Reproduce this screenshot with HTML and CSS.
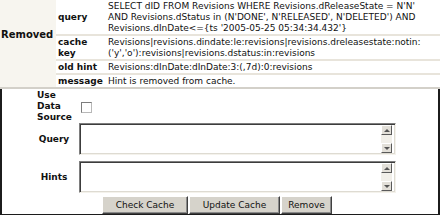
FILE: index.html
```html
<!DOCTYPE html>
<html lang="en">
<head>
    <meta charset="UTF-8">
    <title>Cache Hint</title>
    <link rel="stylesheet" href="styles.css">
</head>
<body>

<table class="result">
    <tr>
        <td class="section" rowspan="4">Removed</td>
        <td class="label">query</td>
        <td class="value">SELECT dID FROM Revisions WHERE Revisions.dReleaseState = N'N'<br>AND Revisions.dStatus in (N'DONE', N'RELEASED', N'DELETED') AND<br>Revisions.dInDate&lt;={ts '2005-05-25 05:34:34.432'}</td>
    </tr>
    <tr>
        <td class="label">cache key</td>
        <td class="value">Revisions|revisions.dindate:le:revisions|revisions.dreleasestate:notin:<br>('y','o'):revisions|revisions.dstatus:in:revisions</td>
    </tr>
    <tr>
        <td class="label">old hint</td>
        <td class="value">Revisions:dInDate:dInDate:3:(,7d):0:revisions</td>
    </tr>
    <tr>
        <td class="label">message</td>
        <td class="value">Hint is removed from cache.</td>
    </tr>
</table>

<div class="form-box">
    <form class="cache-form">
        <label class="field-label left" for="useDataSource">Use Data Source</label>
        <div class="check-cell"><input type="checkbox" id="useDataSource"></div>

        <label class="field-label" for="query">Query</label>
        <div class="textbox">
            <textarea id="query"></textarea>
            <div class="scroll"><span class="arrow up"></span><span class="arrow down"></span></div>
        </div>

        <label class="field-label spaced" for="hints">Hints</label>
        <div class="textbox spaced">
            <textarea id="hints"></textarea>
            <div class="scroll"><span class="arrow up"></span><span class="arrow down"></span></div>
        </div>

        <div class="buttons">
            <button type="button" class="btn btn-check">Check Cache</button>
            <button type="button" class="btn btn-update">Update Cache</button>
            <button type="button" class="btn btn-remove">Remove</button>
        </div>
    </form>
</div>

</body>
</html>
```

FILE: styles.css
```css
body {
    margin: 0;
    width: 440px;
    font-family: "DejaVu Sans", Verdana, sans-serif;
    font-size: 9px;
    color: #111;
    background-color: #fff;
}

/* result table */
.result {
    width: 100%;
    table-layout: fixed;
    border-collapse: collapse;
    line-height: 11px;
}
.result td {
    padding: 1px 0 0 0;
    border-bottom: 2px solid #e8e4db;
    vertical-align: middle;
}
.result tr:last-child td,
.result td.section {
    border-bottom-color: #d3d0c9;
}
.result .section {
    width: 55px;
    padding: 0 0 18px 1px;
    font-size: 10px;
    font-weight: bold;
    background-color: #f7f5ef;
}
.result .label {
    width: 48px;
    padding-left: 2px;
    font-weight: bold;
}
.result .value {
    padding-left: 2px;
    white-space: nowrap;
    overflow: hidden;
}

/* form */
.form-box {
    border: 2px solid #1c1c1c;
    border-top: none;
}
.cache-form {
    display: grid;
    grid-template-columns: 46px 317px;
    grid-template-rows: 34px 32px auto auto;
    align-items: center;
    margin-left: 31px;
}
.field-label {
    padding: 0 6px 0 2px;
    line-height: 11px;
    font-weight: bold;
    text-align: center;
}
.field-label.left {
    padding-left: 4px;
    text-align: left;
}
.spaced {
    margin-top: 6px;
}
.check-cell input {
    appearance: none;
    display: block;
    width: 11px;
    height: 11px;
    margin: 2px 0 0 2px;
    border: 1px solid #7d7d7d;
    border-right-color: #b8b8b8;
    border-bottom-color: #b8b8b8;
    background-color: #fff;
}

.textbox {
    display: flex;
    height: 32px;
    box-sizing: border-box;
    padding: 1px;
    border: 1px solid;
    border-color: #7e7e7e #f4f2ec #f4f2ec #7e7e7e;
    box-shadow: inset 1px 1px 0 #3c3c3c, inset -1px -1px 0 #dedbd2;
    background-color: #fff;
}
.textbox textarea {
    flex: 1;
    margin: 0;
    padding: 2px;
    border: none;
    outline: none;
    resize: none;
    background: transparent;
    font-family: inherit;
    font-size: 9px;
}
.scroll {
    display: flex;
    flex-direction: column;
    justify-content: space-between;
    width: 11px;
    margin-right: 2px;
    background-color: #f1efe9;
}
.arrow {
    position: relative;
    height: 10px;
    box-sizing: border-box;
    border: 1px solid;
    border-color: #fff #5a5a5a #5a5a5a #fff;
    background-color: #e2dfd8;
}
.arrow::after {
    content: "";
    position: absolute;
    left: 2px;
    top: 3px;
    border-left: 3px solid transparent;
    border-right: 3px solid transparent;
}
.arrow.up::after {
    border-bottom: 3px solid #555;
}
.arrow.down::after {
    border-top: 3px solid #555;
}

.buttons {
    grid-column: 1 / span 2;
    display: flex;
    justify-content: center;
    gap: 1px;
    margin-top: 3px;
    padding-left: 5px;
}
.btn {
    height: 18px;
    padding: 0;
    font-family: "DejaVu Sans", Verdana, sans-serif;
    font-size: 9px;
    color: #111;
    background-color: #d6d3cb;
    border: 1px solid;
    border-color: #fff #404040 #404040 #fff;
    box-shadow: inset -1px -1px 0 #8a8a8a;
}
.btn-check {
    width: 86px;
}
.btn-update {
    width: 91px;
}
.btn-remove {
    width: 51px;
}
```
